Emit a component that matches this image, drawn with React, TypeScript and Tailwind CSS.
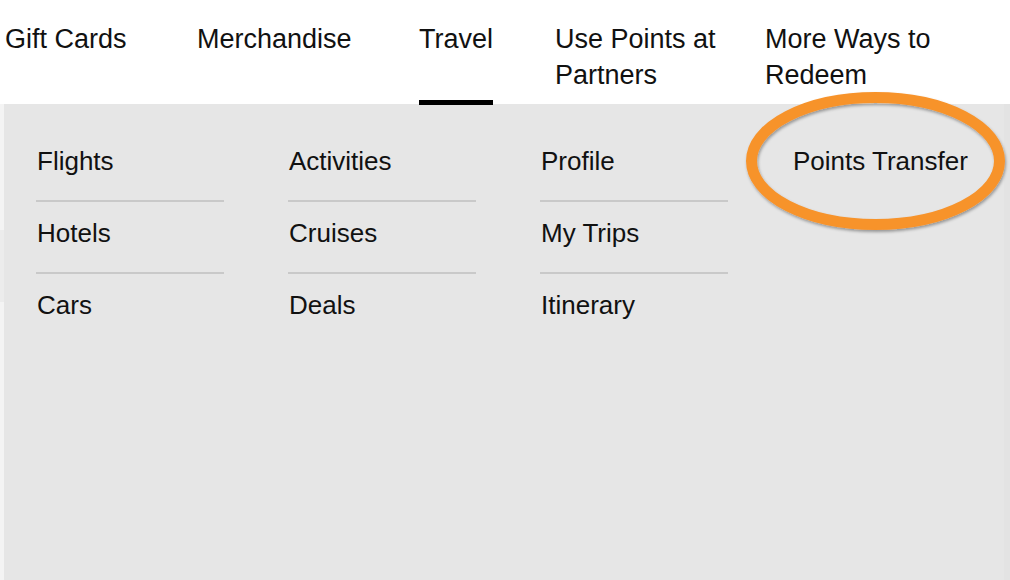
import React from "react";

const navItems = [
  { label: "Gift Cards", w: "w-[192px]" },
  { label: "Merchandise", w: "w-[222px]" },
  { label: "Travel", w: "w-[136px]", active: true },
  { label: "Use Points at Partners", w: "w-[210px]", narrow: "max-w-[170px]" },
  { label: "More Ways to Redeem", w: "w-[240px]", narrow: "max-w-[180px]" },
];

const columns = [
  ["Flights", "Hotels", "Cars"],
  ["Activities", "Cruises", "Deals"],
  ["Profile", "My Trips", "Itinerary"],
  ["Points Transfer"],
];

export default function App() {
  return (
    <div
      className="relative w-[1010px] h-[580px] overflow-hidden bg-white text-[#111]"
      style={{ fontFamily: '"Liberation Sans", Arial, sans-serif' }}
    >
      {/* top navigation */}
      <nav className="flex h-[104px] pl-[5px] pt-[21px] text-[27px] leading-[36px]">
        {navItems.map((item) => (
          <div key={item.label} className={`${item.w} shrink-0`}>
            <span className={`relative inline-block ${item.narrow ?? ""}`}>
              {item.label}
              {item.active && (
                <span className="absolute left-0 right-0 top-[79px] h-[5px] bg-black" />
              )}
            </span>
          </div>
        ))}
      </nav>

      {/* dropdown panel */}
      <div className="flex h-[476px]">
        <div className="flex w-[4px] shrink-0 flex-col bg-[#f4f4f4]">
          <div className="h-[126px]" />
          <div className="h-[72px] bg-[#ececec]" />
        </div>
        <div className="flex flex-1 gap-[64px] bg-[#e6e6e6] pl-[32px] pt-[26px] text-[26px] leading-[30px]">
          {columns.map((col, ci) => (
            <ul key={ci} className="w-[188px] shrink-0">
              {col.map((item, i) => (
                <li
                  key={item}
                  className={`pt-[16px] pb-[24px] pl-px ${
                    i < col.length - 1 ? "border-b-2 border-[#c9c9c9]" : ""
                  }`}
                >
                  {item}
                </li>
              ))}
            </ul>
          ))}
        </div>
        <div className="w-[6px] shrink-0 bg-[#e3e3e3]" />
      </div>

      {/* orange annotation ellipse */}
      <svg
        className="pointer-events-none absolute left-[740px] top-[86px]"
        width="272"
        height="152"
        viewBox="0 0 272 152"
      >
        <defs>
          <filter id="sh" x="-10%" y="-10%" width="120%" height="130%">
            <feDropShadow dx="1" dy="2" stdDeviation="1.5" floodColor="#000" floodOpacity="0.35" />
          </filter>
        </defs>
        <ellipse
          cx="135.5"
          cy="75"
          rx="124"
          ry="63.5"
          fill="none"
          stroke="#f7932c"
          strokeWidth="11"
          filter="url(#sh)"
        />
      </svg>
    </div>
  );
}
